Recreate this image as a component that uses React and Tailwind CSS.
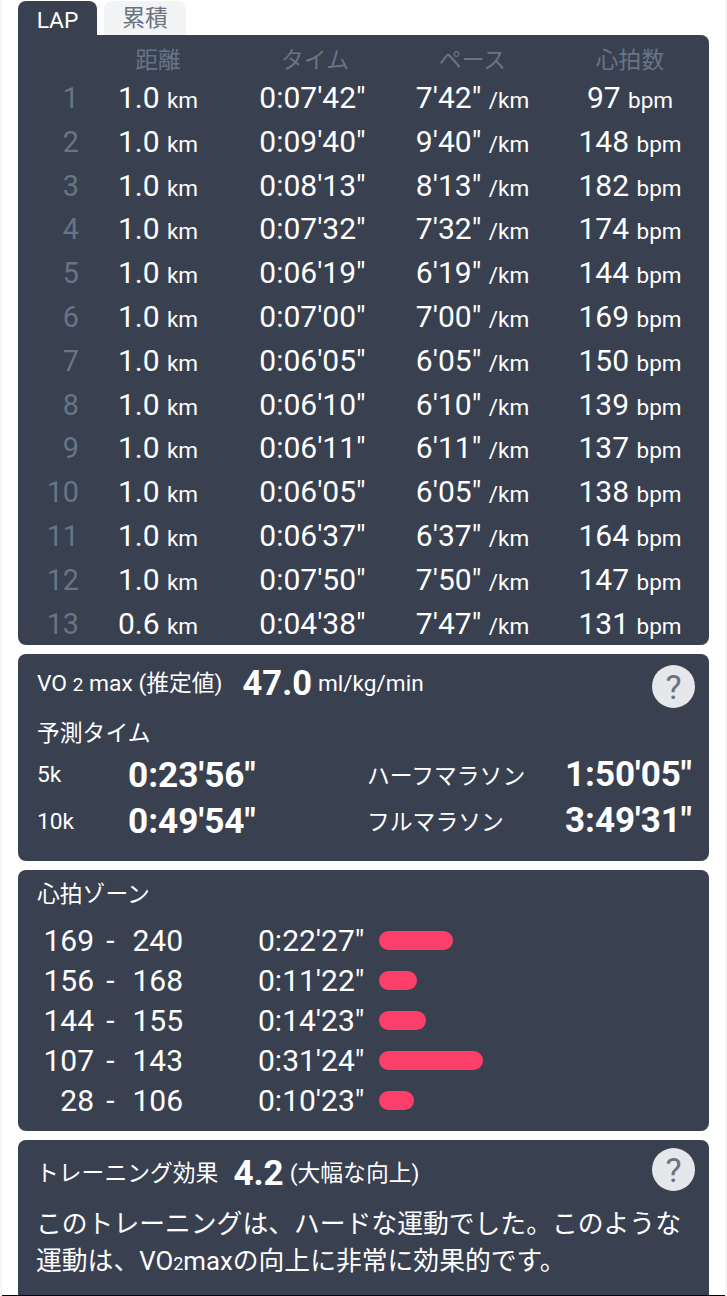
const rows = [
  ["1","1.0","0:07'42\"","7'42\"","97"],
  ["2","1.0","0:09'40\"","9'40\"","148"],
  ["3","1.0","0:08'13\"","8'13\"","182"],
  ["4","1.0","0:07'32\"","7'32\"","174"],
  ["5","1.0","0:06'19\"","6'19\"","144"],
  ["6","1.0","0:07'00\"","7'00\"","169"],
  ["7","1.0","0:06'05\"","6'05\"","150"],
  ["8","1.0","0:06'10\"","6'10\"","139"],
  ["9","1.0","0:06'11\"","6'11\"","137"],
  ["10","1.0","0:06'05\"","6'05\"","138"],
  ["11","1.0","0:06'37\"","6'37\"","164"],
  ["12","1.0","0:07'50\"","7'50\"","147"],
  ["13","0.6","0:04'38\"","7'47\"","131"],
];
const zones = [
  ["169","240","0:22'27\"",74],
  ["156","168","0:11'22\"",38],
  ["144","155","0:14'23\"",47],
  ["107","143","0:31'24\"",104],
  ["28","106","0:10'23\"",35],
];
const font = { fontFamily: '"Roboto","Noto Sans CJK JP",sans-serif' };
function Help({ className }) {
  return (
    <div className={"absolute right-[14px] flex h-[43px] w-[43px] items-center justify-center rounded-full bg-[#e5e7eb] text-[34px] leading-none text-[#6b7280] " + className}>?</div>
  );
}
export default function App() {
  return (
    <div className="h-[1296px] overflow-hidden border-x-2 border-[#f5f5f5] bg-white text-white" style={font}>
      <div className="h-[1295px] overflow-hidden px-[16px]">
        <div className="flex h-[35px] items-end gap-[7px]">
          <div className="flex h-[34px] w-[79px] items-center justify-center rounded-t-[8px] bg-[#394050] pt-[6px] text-[22.8px]">LAP</div>
          <div className="flex h-[34px] w-[82px] items-center justify-center rounded-t-[8px] bg-[#f3f4f6] pt-[2px] text-[22.8px] text-[#6b7280]">累積</div>
        </div>
        <div className="h-[610px] rounded-b-[8px] rounded-tr-[8px] bg-[#394050] pt-[9px]">
          <div className="grid h-[31px] grid-cols-[62px_156px_158px_157px_158px] items-center text-center text-[22.8px] text-[#677586]">
            <div />
            <div>距離</div>
            <div>タイム</div>
            <div>ペース</div>
            <div>心拍数</div>
          </div>
          {rows.map((r) => (
            <div key={r[0]} className="grid h-[43.8px] grid-cols-[62px_156px_158px_157px_158px] items-center text-center whitespace-nowrap">
              <div className="pr-[1px] pt-[2px] text-right text-[28.8px] text-[#677586]">{r[0]}</div>
              <div className="text-[30px]">{r[1]} <span className="text-[22.5px]">km</span></div>
              <div className="pr-[5px] text-[30px]">{r[2]}</div>
              <div className="text-[30px]">{r[3]} <span className="text-[22.5px]">/km</span></div>
              <div className="text-[30px]">{r[4]} <span className="text-[22.5px]">bpm</span></div>
            </div>
          ))}
        </div>
        <div className="relative mt-[9px] h-[207px] rounded-[8px] bg-[#394050] pl-[19px] pr-[17px] pt-[10px]">
          <div className="flex h-[40px] items-center whitespace-nowrap text-[22.8px]">
            <span>VO <span className="text-[19px]">2</span> max (推定値)</span>
            <span className="ml-[20px] text-[34.5px] font-bold">47.0</span>
            <span className="ml-[6px] text-[22.6px]">ml/kg/min</span>
          </div>
          <Help className="top-[11px]" />
          <div className="mt-[14px] text-[22.8px] leading-[32px]">予測タイム</div>
          <div className="mt-[2px] grid grid-cols-[91px_239px_1fr_auto] items-center whitespace-nowrap text-[22.8px]">
            <div className="h-[46px] leading-[46px]">5k</div>
            <div className="h-[46px] text-[35.2px] font-bold leading-[46px]">0:23'56"</div>
            <div className="h-[46px] leading-[50px]">ハーフマラソン</div>
            <div className="h-[46px] text-[35px] font-bold leading-[46px]">1:50'05"</div>
            <div className="h-[46px] leading-[47px]">10k</div>
            <div className="h-[46px] text-[35.2px] font-bold leading-[46px]">0:49'54"</div>
            <div className="h-[46px] leading-[50px]">フルマラソン</div>
            <div className="h-[46px] text-[35px] font-bold leading-[46px]">3:49'31"</div>
          </div>
        </div>
        <div className="mt-[9px] h-[261px] rounded-[8px] bg-[#394050] px-[19px] pt-[8px]">
          <div className="text-[22.8px] leading-[34px]">心拍ゾーン</div>
          <div className="mt-[8px]">
            {zones.map((z) => (
              <div key={z[0]} className="flex h-[40px] items-center whitespace-nowrap text-[30px]">
                <span className="inline-block w-[57px] text-right">{z[0]}</span>
                <span className="inline-block w-[33px] text-center">-</span>
                <span className="inline-block w-[56px] text-right">{z[1]}</span>
                <span className="ml-[75px]">{z[2]}</span>
                <div className="ml-[15px] h-[19px] rounded-full bg-[#fb3f68]" style={{ width: z[3] }} />
              </div>
            ))}
          </div>
        </div>
        <div className="relative mt-[9px] h-[160px] rounded-t-[8px] bg-[#394050] px-[18px] pt-[15px]">
          <Help className="top-[8px]" />
          <div className="flex h-[38px] items-center whitespace-nowrap text-[22.8px]">
            <span>トレーニング効果</span>
            <span className="ml-[15px] text-[35px] font-bold">4.2</span>
            <span className="ml-[6px]">(大幅な向上)</span>
          </div>
          <div className="mt-[13px] text-[25.8px] leading-[37px]">このトレーニングは、ハードな運動でした。このような運動は、VO<span className="text-[18px]">2</span>maxの向上に非常に効果的です。</div>
        </div>
      </div>
      <div className="h-px bg-black" />
    </div>
  );
}
